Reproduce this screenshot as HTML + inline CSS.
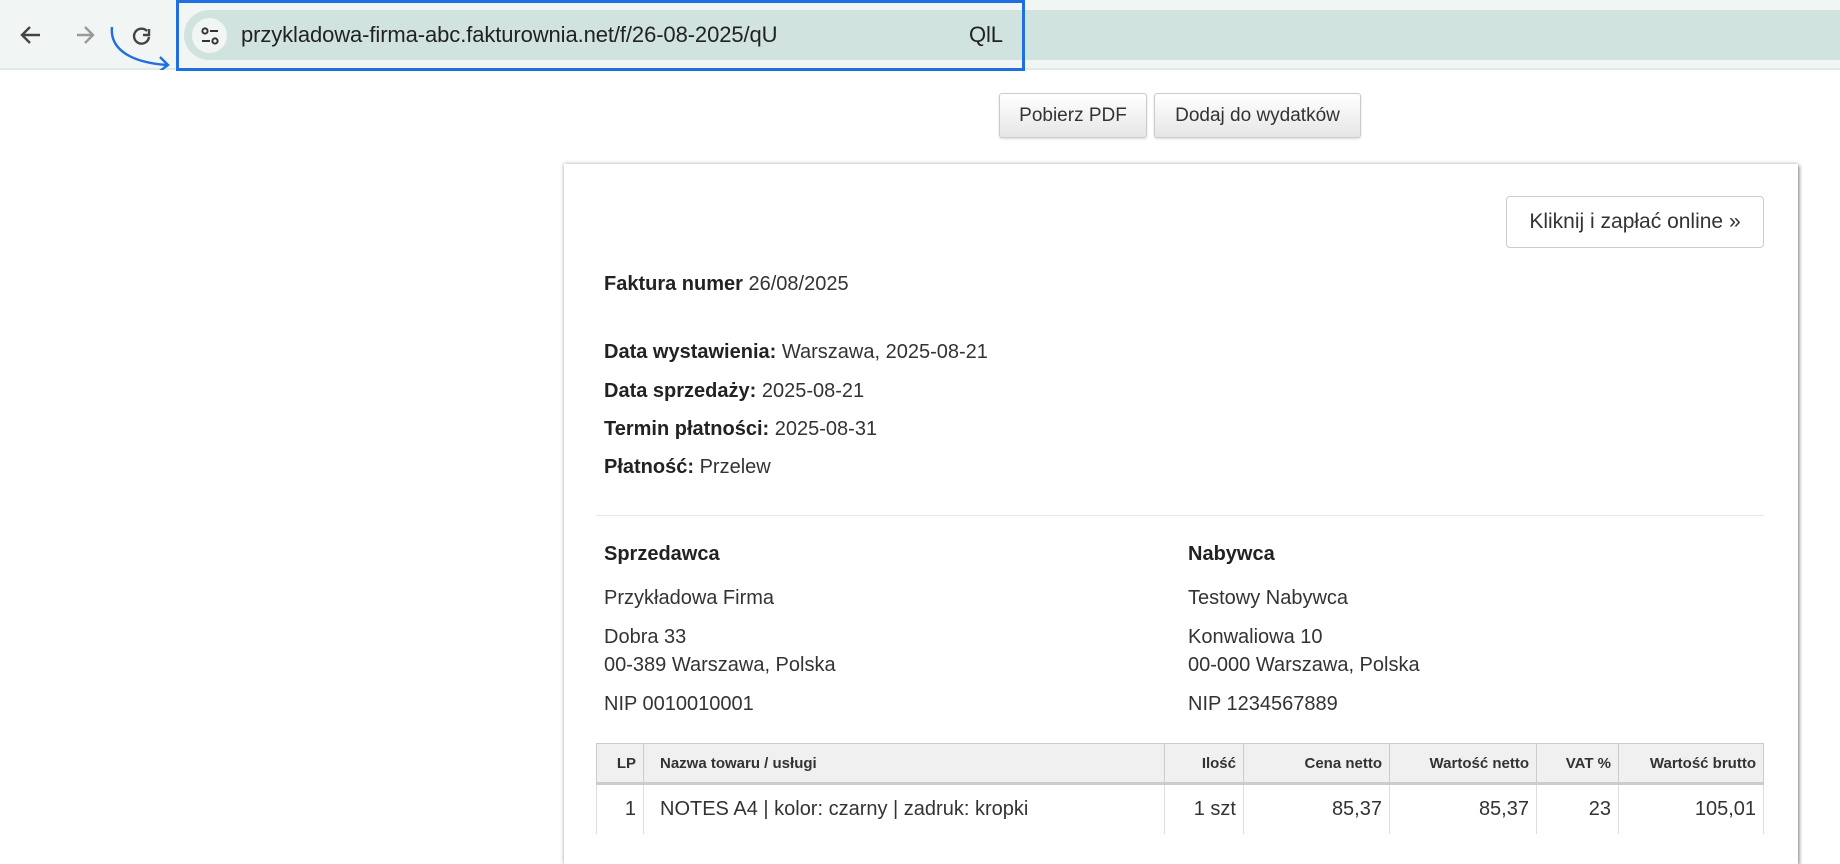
<!DOCTYPE html>
<html><head><meta charset="utf-8">
<style>
*{margin:0;padding:0;box-sizing:border-box}
body{width:1840px;height:833px;overflow:hidden;background:#fff;font-family:"Liberation Sans",Arial,sans-serif;color:#333;position:relative}
.abs{position:absolute}
.top{left:0;top:0;width:1840px;height:70px;background:#f1f6f4;border-bottom:2px solid #e2e8e6}
.addr{left:184px;top:10px;width:1656px;height:50px;background:#d1e3de;border-radius:25px 0 0 25px}
.hl{left:176px;top:0;width:849px;height:71px;border:3px solid #1f6fe0}
.url{left:241px;top:22px;font-size:22px;color:#222;white-space:nowrap;letter-spacing:-0.1px}
.btn{top:93px;height:45px;background:linear-gradient(#fff,#e6e6e6);border:1px solid #ccc;border-radius:3px;font-size:19px;color:#333;line-height:43px;text-align:center;box-shadow:0 1px 2px rgba(0,0,0,.15)}
.card{left:564px;top:164px;width:1234px;height:700px;background:#fff;box-shadow:0 0 4px rgba(0,0,0,.35),2px 2px 3px rgba(0,0,0,.25)}
.t{font-size:20px;color:#333;white-space:nowrap}
b{font-weight:bold;color:#222}
table{position:absolute;left:596px;top:743px;width:1168px;border-collapse:collapse;font-size:20px}
th{background:#f0f0f0;font-size:15px;font-weight:bold;height:40px;border:1px solid #ccc;border-bottom:3px solid #ccc;text-align:right;padding:0 7px;color:#333}
td{height:50px;border-left:1px solid #ddd;border-right:1px solid #ddd;text-align:right;padding:0 7px;color:#333}
</style></head><body>
<div class="abs top"></div>
<div class="abs addr"></div>
<svg class="abs" style="left:0;top:0" width="180" height="70">
<path d="M40 35H22M30 27l-8 8 8 8" stroke="#444" stroke-width="2.4" fill="none"/>
<path d="M93 35H77M85 27l8 8-8 8" stroke="#999" stroke-width="2.4" fill="none"/>
<path d="M149 37a7.5 7.5 0 1 1-2-6" stroke="#444" stroke-width="2.4" fill="none"/>
<path d="M149 29v6h-6" stroke="#444" stroke-width="2.4" fill="none"/>
<path d="M112 27c-2 18 12 35 55 38" stroke="#1f6fe0" stroke-width="2.4" fill="none"/>
<path d="M160 57l8 8-8 6" stroke="#1f6fe0" stroke-width="2.4" fill="none"/>
</svg>
<div class="abs" style="left:192px;top:18px;width:35px;height:35px;border-radius:50%;background:#f1f6f4"></div>
<svg class="abs" style="left:198px;top:24px" width="24" height="24">
<circle cx="7" cy="7" r="2.6" stroke="#333" stroke-width="2" fill="none"/><path d="M12 7h8M4 17h8" stroke="#333" stroke-width="2"/><circle cx="17" cy="17" r="2.6" stroke="#333" stroke-width="2" fill="none"/>
</svg>
<div class="abs url">przykladowa-firma-abc.fakturownia.net/f/26-08-2025/qU</div>
<div class="abs url" style="left:969px">QlL</div>
<div class="abs hl"></div>

<div class="abs btn" style="left:999px;width:148px">Pobierz PDF</div>
<div class="abs btn" style="left:1154px;width:207px">Dodaj do wydatków</div>

<div class="abs card"></div>
<div class="abs" style="left:1506px;top:196px;width:258px;height:52px;border:1px solid #ccc;border-radius:4px;font-size:21px;line-height:50px;text-align:center;color:#333;background:#fff">Kliknij i zapłać online »</div>

<div class="abs t" style="left:604px;top:273px"><b>Faktura numer</b> 26/08/2025</div>
<div class="abs t" style="left:604px;top:341px"><b>Data wystawienia:</b> Warszawa, 2025-08-21</div>
<div class="abs t" style="left:604px;top:380px"><b>Data sprzedaży:</b> 2025-08-21</div>
<div class="abs t" style="left:604px;top:418px"><b>Termin płatności:</b> 2025-08-31</div>
<div class="abs t" style="left:604px;top:456px"><b>Płatność:</b> Przelew</div>
<div class="abs" style="left:596px;top:515px;width:1168px;height:1px;background:#e8e8e8"></div>

<div class="abs t" style="left:604px;top:543px"><b>Sprzedawca</b></div>
<div class="abs t" style="left:604px;top:587px">Przykładowa Firma</div>
<div class="abs t" style="left:604px;top:626px">Dobra 33</div>
<div class="abs t" style="left:604px;top:654px">00-389 Warszawa, Polska</div>
<div class="abs t" style="left:604px;top:693px">NIP 0010010001</div>

<div class="abs t" style="left:1188px;top:543px"><b>Nabywca</b></div>
<div class="abs t" style="left:1188px;top:587px">Testowy Nabywca</div>
<div class="abs t" style="left:1188px;top:626px">Konwaliowa 10</div>
<div class="abs t" style="left:1188px;top:654px">00-000 Warszawa, Polska</div>
<div class="abs t" style="left:1188px;top:693px">NIP 1234567889</div>

<table>
<tr><th style="width:47px">LP</th><th style="width:521px;text-align:left;padding-left:16px">Nazwa towaru / usługi</th><th style="width:79px">Ilość</th><th style="width:146px">Cena netto</th><th style="width:147px">Wartość netto</th><th style="width:82px">VAT %</th><th>Wartość brutto</th></tr>
<tr><td>1</td><td style="text-align:left;padding-left:16px">NOTES A4 | kolor: czarny | zadruk: kropki</td><td>1 szt</td><td>85,37</td><td>85,37</td><td>23</td><td>105,01</td></tr>
</table>
</body></html>
